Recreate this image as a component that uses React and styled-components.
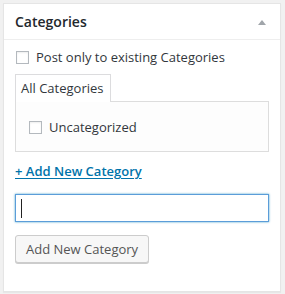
import React from "react";
import styled, { createGlobalStyle } from "styled-components";

const Global = createGlobalStyle`
  html, body { margin: 0; padding: 0; background: #f1f1f1; }
  body { font-family: "Open Sans", "Liberation Sans", sans-serif; font-size: 13px; color: #444; }
  * { box-sizing: border-box; }
`;

const Page = styled.div`
  padding: 3px 4px 5px 3px;
`;

const Box = styled.div`
  background: #fff;
  border: 1px solid #e5e5e5;
  box-shadow: 0 1px 1px rgba(0, 0, 0, 0.04);
  padding-bottom: 28px;
`;

const Header = styled.div`
  height: 36px;
  border-bottom: 1px solid #eee;
  display: flex;
  align-items: center;
  justify-content: space-between;
  padding: 0 14px 0 11px;
`;

const Title = styled.h2`
  margin: 0;
  font-size: 14px;
  font-weight: 600;
  line-height: 19px;
  color: #23282d;
`;

const Toggle = styled.span`
  width: 0;
  height: 0;
  border-left: 4px solid transparent;
  border-right: 4px solid transparent;
  border-bottom: 5px solid #a0a5aa;
  margin-top: 2px;
`;

const Inside = styled.div`
  padding: 0 11px;
  display: flex;
  flex-direction: column;
  align-items: flex-start;
`;

const CheckRow = styled.label`
  display: flex;
  align-items: center;
  gap: 7px;
  height: 19px;
  line-height: 19px;
  color: #32373c;
  font-size: 13px;
  margin: ${(p) => p.$m || "0"};
`;

const Check = styled.span`
  width: 13px;
  height: 13px;
  border: 1px solid #b4b9be;
  background: #fff;
  box-shadow: inset 0 1px 2px rgba(0, 0, 0, 0.07);
  flex: none;
`;

const Tabs = styled.div`
  display: flex;
  margin-top: 7px;
  position: relative;
  z-index: 1;
  margin-bottom: -1px;
`;

const Tab = styled.div`
  height: 28px;
  padding: 0 5px;
  border: 1px solid #dcdcde;
  border-bottom: none;
  background: #fff;
  line-height: 26px;
  color: #32373c;
  font-size: 13px;
  width: 96px;
`;

const Panel = styled.div`
  align-self: stretch;
  height: 51px;
  border: 1px solid #dddddd;
  background: #fdfdfd;
  padding: 16px 13px 0 13px;
`;

const AddLink = styled.a`
  margin-top: 10px;
  font-size: 13px;
  font-weight: 600;
  line-height: 19px;
  color: #0073aa;
  text-decoration: underline;
  text-underline-offset: 2px;
  cursor: pointer;
`;

const Field = styled.div`
  align-self: stretch;
  margin-top: 13px;
  height: 28px;
  border: 1px solid #5b9dd9;
  box-shadow: 0 0 2px rgba(30, 140, 190, 0.8);
  background: #fff;
  display: flex;
  align-items: center;
  padding-left: 5px;
`;

const Caret = styled.span`
  width: 1px;
  height: 19px;
  background: #222;
`;

const Button = styled.button`
  margin-top: 13px;
  height: 28px;
  padding: 0 10px;
  font-family: "Open Sans", "Liberation Sans", sans-serif;
  font-size: 13px;
  line-height: 26px;
  color: #555;
  background: #f7f7f7;
  border: 1px solid #ccc;
  border-radius: 3px;
  box-shadow: 0 1px 0 #ccc;
  cursor: pointer;
`;

export default function App() {
  return (
    <>
      <Global />
      <Page>
        <Box>
          <Header>
            <Title>Categories</Title>
            <Toggle />
          </Header>
          <Inside>
            <CheckRow $m="8px 0 0 1px">
              <Check />
              Post only to existing Categories
            </CheckRow>
            <Tabs>
              <Tab>All Categories</Tab>
            </Tabs>
            <Panel>
              <CheckRow>
                <Check />
                Uncategorized
              </CheckRow>
            </Panel>
            <AddLink>+ Add New Category</AddLink>
            <Field>
              <Caret />
            </Field>
            <Button>Add New Category</Button>
          </Inside>
        </Box>
      </Page>
    </>
  );
}
